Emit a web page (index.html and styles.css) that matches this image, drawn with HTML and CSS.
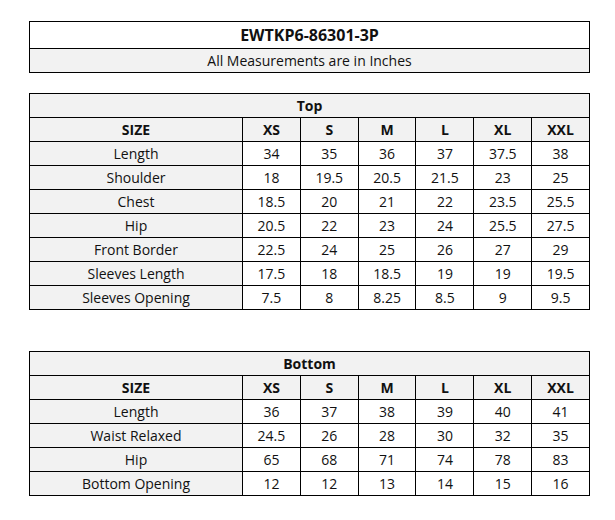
FILE: index.html
```html
<!DOCTYPE html>
<html lang="en">
<head>
<meta charset="utf-8">
<title>EWTKP6-86301-3P Size Chart</title>
<link rel="stylesheet" href="styles.css">
</head>
<body>
<main class="page">
  <table class="sheet head-table">
    <tr class="title-row"><td>EWTKP6-86301-3P</td></tr>
    <tr class="sub-row"><td>All Measurements are in Inches</td></tr>
  </table>

  <table class="sheet size-table top-table">
    <colgroup><col class="c-label"><col><col><col><col><col><col></colgroup>
    <tr class="caption-row"><td colspan="7">Top</td></tr>
    <tr class="size-row"><td>SIZE</td><td>XS</td><td>S</td><td>M</td><td>L</td><td>XL</td><td>XXL</td></tr>
    <tr><td class="label">Length</td><td>34</td><td>35</td><td>36</td><td>37</td><td>37.5</td><td>38</td></tr>
    <tr><td class="label">Shoulder</td><td>18</td><td>19.5</td><td>20.5</td><td>21.5</td><td>23</td><td>25</td></tr>
    <tr><td class="label">Chest</td><td>18.5</td><td>20</td><td>21</td><td>22</td><td>23.5</td><td>25.5</td></tr>
    <tr><td class="label">Hip</td><td>20.5</td><td>22</td><td>23</td><td>24</td><td>25.5</td><td>27.5</td></tr>
    <tr><td class="label">Front Border</td><td>22.5</td><td>24</td><td>25</td><td>26</td><td>27</td><td>29</td></tr>
    <tr><td class="label">Sleeves Length</td><td>17.5</td><td>18</td><td>18.5</td><td>19</td><td>19</td><td>19.5</td></tr>
    <tr><td class="label">Sleeves Opening</td><td>7.5</td><td>8</td><td>8.25</td><td>8.5</td><td>9</td><td>9.5</td></tr>
  </table>

  <table class="sheet size-table bottom-table">
    <colgroup><col class="c-label"><col><col><col><col><col><col></colgroup>
    <tr class="caption-row"><td colspan="7">Bottom</td></tr>
    <tr class="size-row"><td>SIZE</td><td>XS</td><td>S</td><td>M</td><td>L</td><td>XL</td><td>XXL</td></tr>
    <tr><td class="label">Length</td><td>36</td><td>37</td><td>38</td><td>39</td><td>40</td><td>41</td></tr>
    <tr><td class="label">Waist Relaxed</td><td>24.5</td><td>26</td><td>28</td><td>30</td><td>32</td><td>35</td></tr>
    <tr><td class="label">Hip</td><td>65</td><td>68</td><td>71</td><td>74</td><td>78</td><td>83</td></tr>
    <tr><td class="label">Bottom Opening</td><td>12</td><td>12</td><td>13</td><td>14</td><td>15</td><td>16</td></tr>
  </table>
</main>
</body>
</html>
```

FILE: styles.css
```css
html, body {
  margin: 0;
  padding: 0;
  background: #ffffff;
}

.page {
  padding: 21px 0 0 29px;
  display: flex;
  flex-direction: column;
  align-items: flex-start;
  font-family: "Open Sans", "Liberation Sans", sans-serif;
  font-size: 14px;
  color: #111111;
}

.sheet {
  border-collapse: separate;
  border-spacing: 0;
  table-layout: fixed;
  width: 561px;
  border-top: 1px solid #000000;
  border-left: 1px solid #000000;
}

.sheet td {
  border-right: 1px solid #000000;
  border-bottom: 1px solid #000000;
  text-align: center;
  vertical-align: middle;
  padding: 0;
  line-height: 23px;
  white-space: nowrap;
  overflow: hidden;
}

.title-row td {
  line-height: 26px;
  font-weight: bold;
  font-size: 16px;
  background: #ffffff;
}

.sub-row td {
  background: #f2f2f2;
}

.top-table {
  margin-top: 20px;
}

.bottom-table {
  margin-top: 41px;
}

.c-label {
  width: 213px;
}

.size-table td {
  background: #ffffff;
}

.size-table .caption-row td,
.size-table .size-row td {
  background: #f2f2f2;
  font-weight: bold;
}

.size-table td.label {
  background: #f2f2f2;
}
```
